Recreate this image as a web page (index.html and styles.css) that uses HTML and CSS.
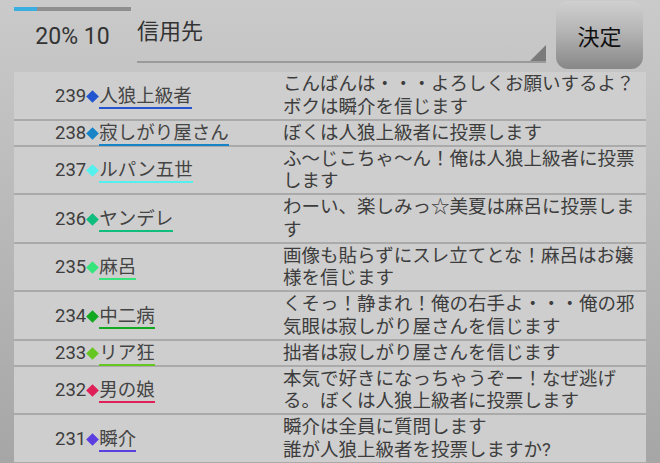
FILE: index.html
```html
<!DOCTYPE html>
<html lang="ja">
<head>
    <meta charset="UTF-8">
    <meta name="viewport" content="width=device-width, initial-scale=1.0">
    <title>投票ログ</title>
    <link rel="stylesheet" href="styles.css">
</head>
<body>

    <div class="header">
        <div class="stats">
            <div class="progress"><div class="progress-fill" style="width: 20%;"></div></div>
            <div class="stats-text">20% 10</div>
        </div>
        <div class="spinner">信用先</div>
        <button class="decide-button">決定</button>
    </div>

    <div class="log-list">
        <div class="log-row c-blue">
            <div class="log-who"><span class="log-no">239</span><span class="mark"></span><span class="log-name">人狼上級者</span></div>
            <div class="log-msg">こんばんは・・・よろしくお願いするよ？ボクは瞬介を信じます</div>
        </div>
        <div class="log-row c-sky">
            <div class="log-who"><span class="log-no">238</span><span class="mark"></span><span class="log-name">寂しがり屋さん</span></div>
            <div class="log-msg">ぼくは人狼上級者に投票します</div>
        </div>
        <div class="log-row c-cyan">
            <div class="log-who"><span class="log-no">237</span><span class="mark"></span><span class="log-name">ルパン五世</span></div>
            <div class="log-msg">ふ～じこちゃ～ん！俺は人狼上級者に投票します</div>
        </div>
        <div class="log-row c-teal">
            <div class="log-who"><span class="log-no">236</span><span class="mark"></span><span class="log-name">ヤンデレ</span></div>
            <div class="log-msg">わーい、楽しみっ☆美夏は麻呂に投票します</div>
        </div>
        <div class="log-row c-mint">
            <div class="log-who"><span class="log-no">235</span><span class="mark"></span><span class="log-name">麻呂</span></div>
            <div class="log-msg">画像も貼らずにスレ立てとな！麻呂はお嬢様を信じます</div>
        </div>
        <div class="log-row c-green">
            <div class="log-who"><span class="log-no">234</span><span class="mark"></span><span class="log-name">中二病</span></div>
            <div class="log-msg">くそっ！静まれ！俺の右手よ・・・俺の邪気眼は寂しがり屋さんを信じます</div>
        </div>
        <div class="log-row c-lime">
            <div class="log-who"><span class="log-no">233</span><span class="mark"></span><span class="log-name">リア狂</span></div>
            <div class="log-msg">拙者は寂しがり屋さんを信じます</div>
        </div>
        <div class="log-row c-pink">
            <div class="log-who"><span class="log-no">232</span><span class="mark"></span><span class="log-name">男の娘</span></div>
            <div class="log-msg">本気で好きになっちゃうぞー！なぜ逃げる。ぼくは人狼上級者に投票します</div>
        </div>
        <div class="log-row c-violet">
            <div class="log-who"><span class="log-no">231</span><span class="mark"></span><span class="log-name">瞬介</span></div>
            <div class="log-msg">瞬介は全員に質問します<br>誰が人狼上級者を投票しますか?</div>
        </div>
    </div>

</body>
</html>
```

FILE: styles.css
```css
/* ページ全体 */
body {
    font-family: Roboto, "Noto Sans CJK JP", sans-serif;
    margin: 0;
    padding: 0;
    height: 463px;
    overflow: hidden;
    background: linear-gradient(#cacaca, #a6a6a6);
    color: #3d3d3d;
}

/* 上部バー */
.header {
    display: flex;
    align-items: flex-start;
    height: 72px;
    padding: 0 17px 0 14px;
}

.stats {
    width: 123px;
    padding-top: 7px;
}

.progress {
    width: 117px;
    height: 4px;
    background-color: #8f8f8f;
}

.progress-fill {
    height: 100%;
    background-color: #3aaee0;
}

.stats-text {
    width: 117px;
    margin-top: 13px;
    font-size: 23px;
    line-height: 26px;
    text-align: center;
    color: #333;
}

/* 信用先 セレクタ */
.spinner {
    flex: 1;
    position: relative;
    height: 42px;
    padding-top: 19px;
    font-size: 22px;
    line-height: 26px;
    color: #333;
    border-bottom: 2px solid #9a9a9a;
}

.spinner::after {
    content: "";
    position: absolute;
    right: 0;
    bottom: 0;
    width: 0;
    height: 0;
    border-left: 16px solid transparent;
    border-bottom: 16px solid #7a7a7a;
}

.decide-button {
    width: 87px;
    height: 68px;
    margin: 1px 0 0 10px;
    padding: 0;
    border: none;
    border-radius: 12px;
    background: linear-gradient(#d0d0d0, #b4b4b4 45%, #878787);
    font-family: "Noto Sans CJK JP", sans-serif;
    font-size: 22px;
    color: #111;
}

/* ログ一覧 */
.log-list {
    margin: 0 14px;
    background-color: #cecece;
    height: 391px;
}

.log-row {
    display: grid;
    grid-template-columns: 269px 1fr;
    border-bottom: 2px solid #aaaaaa;
}

.log-who {
    display: flex;
    align-items: center;
    padding-left: 41px;
    font-size: 18.5px;
}

.log-no {
    line-height: 21px;
    padding-top: 2px;
}

.mark {
    width: 9px;
    height: 9px;
    margin: 2px 2px 0;
    transform: rotate(45deg);
    background-color: var(--c);
}

.log-name {
    line-height: 21px;
    margin-bottom: -4px;
    color: #444;
    border-bottom: 2px solid var(--c);
}

.log-msg {
    padding: 1px 4px 0.5px 0;
    font-size: 18.5px;
    line-height: 22.5px;
}

/* 色 */
.c-blue   { --c: #2354d0; }
.c-sky    { --c: #1784c8; }
.c-cyan   { --c: #55f0ee; }
.c-teal   { --c: #0fbd7c; }
.c-mint   { --c: #35e57c; }
.c-green  { --c: #12a81f; }
.c-lime   { --c: #66c722; }
.c-pink   { --c: #df2058; }
.c-violet { --c: #5b3fe0; }
```
